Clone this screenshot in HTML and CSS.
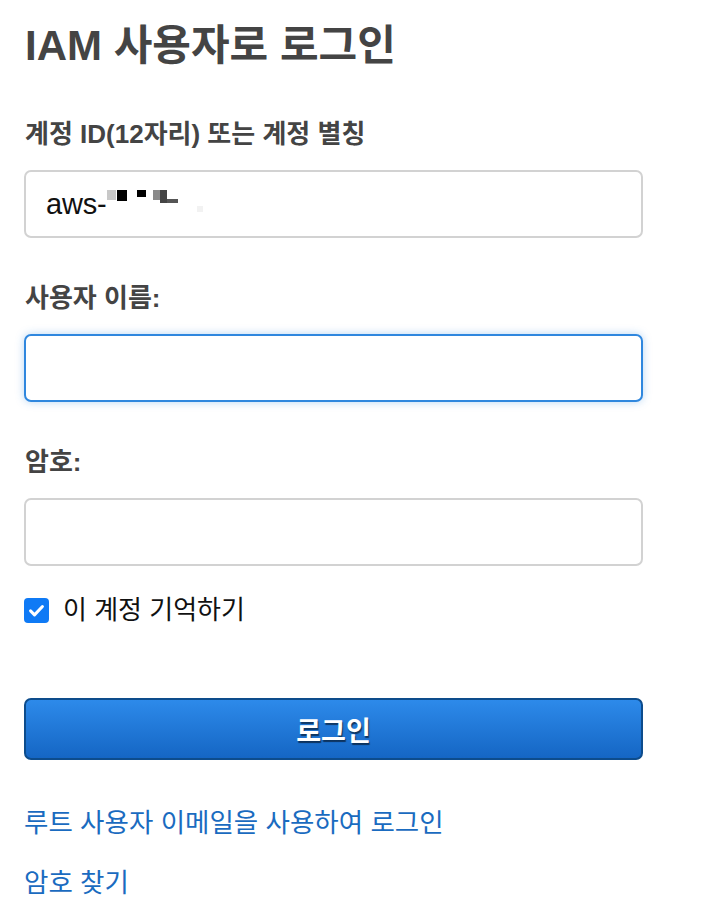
FILE: index.html
```html
<!DOCTYPE html>
<html lang="ko">
<head>
<meta charset="utf-8">
<link rel="stylesheet" href="styles.css">
</head>
<body>
<main class="signin">
  <h1 class="title">IAM 사용자로 로그인</h1>
  <form class="form">
    <div class="field">
      <label class="label" for="account">계정 ID(12자리) 또는 계정 별칭</label>
      <div class="input filled" id="account"><span class="value">aws-</span><span class="mosaic"><i class="m m1"></i><i class="m m2"></i><i class="m m3"></i><i class="m m4"></i><i class="m m5"></i><i class="m m6"></i><i class="m m7"></i></span></div>
    </div>
    <div class="field">
      <label class="label" for="user">사용자 이름:</label>
      <input class="input focused" id="user" type="text">
    </div>
    <div class="field">
      <label class="label" for="pw">암호:</label>
      <input class="input" id="pw" type="password">
    </div>
    <label class="remember">
      <span class="check"><svg viewBox="0 0 24 24" width="19" height="19"><path d="M4.5 12.5l5 5L19.5 7" fill="none" stroke="#fff" stroke-width="3.8" stroke-linecap="round" stroke-linejoin="round"/></svg></span>
      <span class="remember-text">이 계정 기억하기</span>
    </label>
    <button class="submit" type="button">로그인</button>
  </form>
  <nav class="links">
    <a class="link" href="#">루트 사용자 이메일을 사용하여 로그인</a>
    <a class="link" href="#">암호 찾기</a>
  </nav>
</main>
</body>
</html>
```
FILE: styles.css
```css
* { box-sizing: border-box; }
html, body { margin: 0; background: #fff; }
body {
  font-family: "Liberation Sans", "Noto Sans CJK KR", sans-serif;
  color: #444;
}
.signin {
  padding: 18px 79px 0 24px;
  display: flex;
  flex-direction: column;
}
.title {
  margin: 0 0 0 1px;
  font-size: 42px;
  line-height: 56px;
  font-weight: 700;
  color: #444;
}
.form {
  display: flex;
  flex-direction: column;
  margin-top: 44px;
}
.field {
  display: flex;
  flex-direction: column;
  gap: 20px;
  margin-bottom: 44px;
}
.field:nth-child(3) { margin-bottom: 28px; }
.label {
  font-size: 26px;
  line-height: 32px;
  font-weight: 700;
  color: #444;
  margin-left: 1px;
}
.input {
  display: flex;
  align-items: center;
  width: 100%;
  height: 68px;
  border: 2px solid #d2d2d2;
  border-radius: 7px;
  padding: 0 20px;
  font-family: inherit;
  font-size: 26px;
  color: #111;
  background: #fff;
  outline: none;
}
.input.focused {
  border-color: #2f87de;
  box-shadow: 0 0 9px rgba(47,135,222,0.35);
}
.value { font-family: "Liberation Sans", sans-serif; font-size: 29px; color: #111; letter-spacing: -0.2px; }
.mosaic { display: inline-flex; align-items: flex-start; height: 24px; margin-top: -4px; }
.m { display: block; width: 8px; height: 8px; }
.m1 { background: #c8c8c8; width: 9px; height: 10px; margin-left: 1px; }
.m2 { background: #000; width: 10px; height: 11px; margin-left: 1px; }
.m3 { background: #000; width: 9px; height: 7px; margin-left: 10px; }
.m4 { background: #8a8a8a; width: 7px; height: 10px; margin-left: 7px; }
.m5 { background: #444; width: 7px; height: 13px; }
.m6 { background: #555; width: 11px; height: 4px; margin-top: 9px; }
.m7 { background: #f2f2f2; width: 6px; height: 6px; margin-left: 19px; margin-top: 16px; }
.remember {
  display: flex;
  align-items: center;
  gap: 14px;
  height: 32px;
}
.check {
  width: 25px;
  height: 25px;
  border-radius: 4px;
  background: #0f7af5;
  display: flex;
  align-items: center;
  justify-content: center;
}
.remember-text {
  font-size: 26px;
  line-height: 32px;
  color: #111;
}
.submit {
  margin-top: 72px;
  width: 100%;
  height: 62px;
  border: 2px solid #0d4c8c;
  border-radius: 7px;
  background: linear-gradient(#2d8aea, #1566c4);
  color: #fff;
  font-family: inherit;
  font-size: 27px;
  font-weight: 700;
  text-shadow: 1px 2px 1px rgba(0,0,0,0.55);
}
.links {
  display: flex;
  flex-direction: column;
  gap: 26px;
  margin-top: 46px;
}
.link {
  font-size: 26.5px;
  line-height: 34px;
  color: #1a6bc0;
  text-decoration: none;
}
```
